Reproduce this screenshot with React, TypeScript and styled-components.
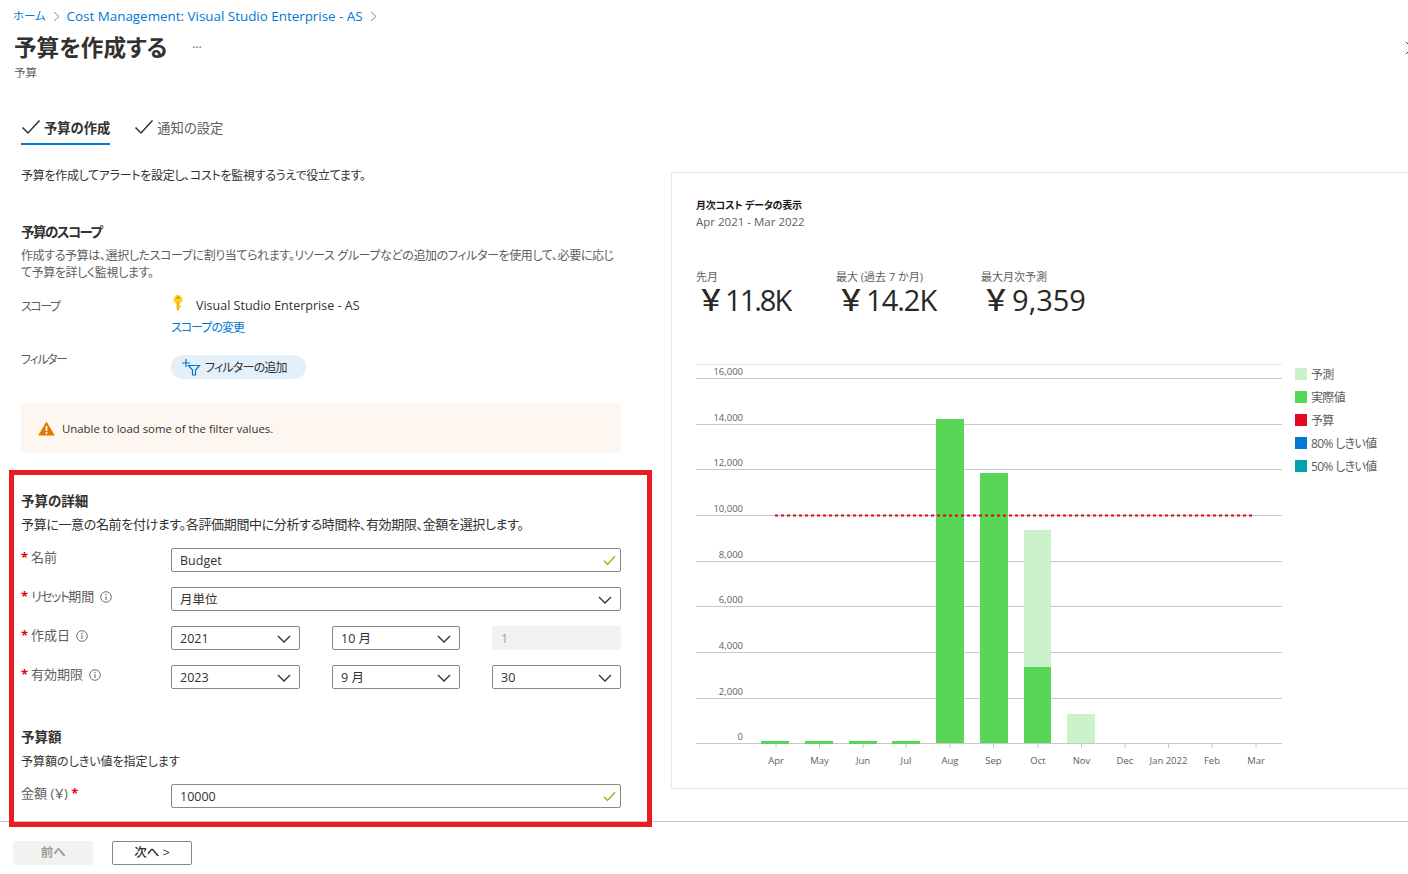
import React from 'react';
import styled, { createGlobalStyle } from 'styled-components';

const GlobalStyle = createGlobalStyle`
  html, body {
    margin: 0;
    padding: 0;
    background: #fff;
    overflow: hidden;
  }
  body {
    font-family: "Open Sans", "Noto Sans CJK JP", sans-serif;
    font-size: 13px;
    font-feature-settings: "palt";
    color: #323130;
  }
  * { box-sizing: border-box; }
`;

const Check = ({ color = '#323130', size = 20, weight = 1.5 }: { color?: string; size?: number; weight?: number }) => (
  <svg width={size} height={size} viewBox="0 0 20 20" fill="none">
    <path d="M1.5 10.5 L7 16 L18.5 3.5" stroke={color} strokeWidth={weight} />
  </svg>
);

const Chevron = () => (
  <svg width="14" height="8" viewBox="0 0 14 8" fill="none">
    <path d="M1 1 L7 7 L13 1" stroke="#323130" strokeWidth="1.3" />
  </svg>
);

const Crumb = () => (
  <svg width="7" height="11" viewBox="0 0 7 11" fill="none">
    <path d="M1 1 L6 5.5 L1 10" stroke="#8a8886" strokeWidth="1" />
  </svg>
);

const Info = () => (
  <svg width="12" height="12" viewBox="0 0 12 12" fill="none">
    <circle cx="6" cy="6" r="5.3" stroke="#605e5c" strokeWidth="0.9" />
    <path d="M6 5.2 V9" stroke="#605e5c" strokeWidth="1" />
    <circle cx="6" cy="3.5" r="0.7" fill="#605e5c" />
  </svg>
);

const KeyIcon = () => (
  <svg width="10" height="17" viewBox="0 0 10 17" fill="none">
    <circle cx="5" cy="4.5" r="4.4" fill="#fcd116" />
    <path d="M3.5 7 H6.5 V14 L5 16 L3.5 14 Z" fill="#f4b90e" />
    <path d="M6.5 10.5 H8 V12 H6.5 Z" fill="#f4b90e" />
    <ellipse cx="5" cy="2.6" rx="1.4" ry="0.9" fill="#a9812a" />
  </svg>
);

const FilterAdd = () => (
  <svg width="20" height="18" viewBox="0 0 20 18" fill="none">
    <path d="M5 1 V9 M1 5 H9" stroke="#0078d4" strokeWidth="1.2" />
    <path d="M7.5 7.5 H18.5 L14.5 12 V17 H11.5 V12 Z" stroke="#0078d4" strokeWidth="1.2" />
  </svg>
);

const Warning = () => (
  <svg width="17" height="15" viewBox="0 0 17 15">
    <path d="M8.5 0.5 L16.8 14.5 H0.2 Z" fill="#e07a00" />
    <path d="M8.5 5 V10" stroke="#fff" strokeWidth="1.6" />
    <circle cx="8.5" cy="12" r="1" fill="#fff" />
  </svg>
);

const Page = styled.div`
  position: relative;
  width: 1408px;
  height: 874px;
  overflow: hidden;
  background: #fff;
`;

const Breadcrumb = styled.nav`
  display: flex;
  align-items: center;
  gap: 7px;
  height: 16px;
  margin: 8px 0 0 13px;
  font-size: 13.4px;
  line-height: 16px;
  color: #0078d4;
`;

const HomeCrumb = styled.span`
  font-size: 11.4px;
`;

const TitleRow = styled.div`
  display: flex;
  align-items: center;
  height: 34px;
  margin: 7px 0 0 14px;
`;

const Title = styled.h1`
  margin: 0;
  font-size: 22.6px;
  font-weight: 600;
  line-height: 34px;
  color: #323130;
`;

const More = styled.span`
  margin-left: 25px;
  font-size: 12px;
  line-height: 12px;
  color: #605e5c;
`;

const Close = styled.svg`
  margin-left: auto;
  margin-right: -11px;
`;

const SubTitle = styled.div`
  margin-left: 14px;
  font-size: 11.5px;
  line-height: 16px;
  color: #605e5c;
`;

const Tabs = styled.div`
  display: flex;
  gap: 24px;
  height: 33px;
  margin: 31px 0 0 21px;
`;

const Tab = styled.div<{ $active?: boolean }>`
  display: flex;
  align-items: center;
  gap: 3px;
  height: 33px;
  padding-bottom: 1px;
  font-size: 13.3px;
  font-weight: ${(p) => (p.$active ? 600 : 400)};
  color: ${(p) => (p.$active ? '#323130' : '#605e5c')};
  border-bottom: 2px solid ${(p) => (p.$active ? '#0078d4' : 'transparent')};
`;

const Main = styled.div`
  display: flex;
  height: 677px;
  border-bottom: 1px solid #c8c6c4;
`;

const FormColumn = styled.div`
  width: 600px;
  margin-left: 21px;
  padding-top: 22px;
`;

const Paragraph = styled.p<{ $size?: number; $tracking?: number }>`
  margin: 0;
  font-size: ${(p) => p.$size ?? 12}px;
  letter-spacing: ${(p) => p.$tracking ?? 0}px;
  line-height: 17px;
  color: #323130;
`;

const Description = styled(Paragraph)`
  color: #605e5c;
`;

const SectionTitle = styled.h2<{ $top: number; $bottom?: number; $tracking?: number }>`
  margin: ${(p) => p.$top}px 0 ${(p) => p.$bottom ?? 6}px;
  font-size: 13.5px;
  font-weight: 600;
  letter-spacing: ${(p) => p.$tracking ?? 0}px;
  line-height: 18px;
  color: #323130;
`;

const Row = styled.div<{ $height: number; $top?: number }>`
  display: grid;
  grid-template-columns: 150px 450px;
  height: ${(p) => p.$height}px;
  margin-top: ${(p) => p.$top ?? 0}px;
`;

const Label = styled.div`
  display: flex;
  align-items: flex-start;
  gap: 8px;
  padding-top: 1px;
  font-size: 13px;
  line-height: 17px;
  color: #605e5c;
`;

const KanaLabel = styled(Label)`
  font-size: 12px;
  letter-spacing: -1.4px;
`;

const Req = styled.span`
  color: #e3000f;
  font-weight: 700;
`;

const LabelText = styled.span`
  display: flex;
  align-items: center;
  gap: 3px;
`;

const Kana = styled.span`
  letter-spacing: -1.5px;
`;

const InfoWrap = styled.span`
  display: inline-flex;
  margin-left: 3px;
`;

const ScopeValue = styled.div`
  display: flex;
  align-items: center;
  gap: 13px;
  font-size: 12.5px;
  line-height: 17px;
`;

const KeyWrap = styled.span`
  display: inline-flex;
  margin: -4px 0 0 2px;
`;

const ScopeLink = styled.div`
  margin-top: 5px;
  font-size: 12px;
  letter-spacing: -1px;
  line-height: 17px;
  color: #0078d4;
`;

const FilterButton = styled.div`
  display: inline-flex;
  align-items: center;
  gap: 4px;
  width: 135px;
  height: 24px;
  margin-top: 5px;
  padding-left: 10px;
  border-radius: 12px;
  background: #e3eff9;
  font-size: 12px;
  letter-spacing: -0.8px;
  color: #323130;
`;

const Notice = styled.div`
  display: flex;
  align-items: center;
  gap: 7px;
  height: 50px;
  margin-top: 11px;
  padding-left: 17px;
  background: #fef7f1;
  font-size: 11.4px;
  color: #323130;
`;

const Field = styled.div<{ $disabled?: boolean }>`
  display: flex;
  align-items: center;
  justify-content: space-between;
  height: 24px;
  padding: 1px 8px 0;
  border: 1px solid ${(p) => (p.$disabled ? '#f3f2f1' : '#8a8886')};
  border-radius: 2px;
  background: ${(p) => (p.$disabled ? '#f3f2f1' : '#fff')};
  color: ${(p) => (p.$disabled ? '#a19f9d' : '#323130')};
  font-size: 12.5px;
  line-height: 22px;
`;

const ValidMark = styled.span`
  display: inline-flex;
  margin-right: -4px;
`;

const Triple = styled.div`
  display: grid;
  grid-template-columns: 129px 128px 129px;
  column-gap: 32px;
`;

const Panel = styled.section`
  flex: none;
  width: 760px;
  height: 617px;
  margin: 27px 0 0 50px;
  padding: 25px 0 0 24px;
  border: 1px solid #e8e8e8;
`;

const PanelTitle = styled.div`
  font-size: 10px;
  font-weight: 600;
  letter-spacing: -0.2px;
  line-height: 14px;
  color: #1b1a19;
`;

const PanelDates = styled.div`
  margin-top: 2px;
  font-size: 11.5px;
  line-height: 16px;
  color: #605e5c;
`;

const Stats = styled.div`
  display: flex;
  margin-top: 40px;
`;

const Stat = styled.div<{ $width: number }>`
  width: ${(p) => p.$width}px;
`;

const StatLabel = styled.div`
  font-size: 11px;
  line-height: 14px;
  color: #605e5c;
`;

const StatValue = styled.div<{ $tracking: number }>`
  display: flex;
  gap: 5px;
  margin-left: 4px;
  padding-top: 1px;
  font-size: 29px;
  font-weight: 500;
  letter-spacing: ${(p) => p.$tracking}px;
  line-height: 30px;
  color: #292827;
`;

const ChartRow = styled.div`
  display: flex;
  margin-top: 49px;
`;

const Legend = styled.ul`
  display: flex;
  flex-direction: column;
  gap: 6px;
  margin: 1px 0 0 12px;
  padding: 0;
  list-style: none;
`;

const LegendItem = styled.li`
  display: flex;
  align-items: center;
  gap: 4px;
  height: 17px;
  font-size: 12px;
  letter-spacing: -0.65px;
  white-space: nowrap;
  color: #605e5c;
`;

const Swatch = styled.span<{ $color: string }>`
  width: 12px;
  height: 12px;
  background: ${(p) => p.$color};
`;

const Footer = styled.div`
  display: flex;
  gap: 19px;
  padding: 19px 0 0 13px;
`;

const FooterButton = styled.div<{ $disabled?: boolean }>`
  display: flex;
  align-items: center;
  justify-content: center;
  width: 80px;
  height: 24px;
  padding-bottom: 3px;
  border: 1px solid ${(p) => (p.$disabled ? '#f3f2f1' : '#8a8886')};
  border-radius: 2px;
  background: ${(p) => (p.$disabled ? '#f3f2f1' : '#fff')};
  color: ${(p) => (p.$disabled ? '#a19f9d' : '#323130')};
  font-size: 12.5px;
  font-weight: ${(p) => (p.$disabled ? 600 : 500)};
`;

const Highlight = styled.div`
  position: absolute;
  left: 9px;
  top: 470px;
  width: 643px;
  height: 357px;
  border: 5px solid #ed1c24;
  pointer-events: none;
`;

const months = ['Apr', 'May', 'Jun', 'Jul', 'Aug', 'Sep', 'Oct', 'Nov', 'Dec', 'Jan 2022', 'Feb', 'Mar'];
const ticks = [16000, 14000, 12000, 10000, 8000, 6000, 4000, 2000, 0];
const monthX = [80, 123.5, 167, 210, 254, 297.5, 342, 385.5, 429, 472.5, 516, 560];

const GREEN = '#57d657';
const LIGHT = '#cbf2cb';
const ORIGIN_Y = 364;

const gridY = (value: number) => Math.round(14 + ((16000 - value) / 2000) * 45.68) + 0.5;

const Chart = () => (
  <svg width="587" height="408" viewBox="0 0 587 408" fontFamily="Open Sans, sans-serif">
    <line x1="0" x2="586" y1="0.5" y2="0.5" stroke="#e6e6e6" />
    {ticks.map((t) => (
      <g key={t}>
        <line x1="0" x2="586" y1={gridY(t)} y2={gridY(t)} stroke="#c8c8c8" />
        <text x="47" y={gridY(t) - 4} textAnchor="end" fontSize="9.5" fill="#605e5c">
          {t.toLocaleString('en-US')}
        </text>
      </g>
    ))}
    {[65, 109, 153, 196].map((x) => (
      <rect key={x} x={x} y="377" width="28" height="3" fill={GREEN} />
    ))}
    <rect x="240" y={419 - ORIGIN_Y} width="28" height={743 - 419} fill={GREEN} />
    <rect x="284" y={473 - ORIGIN_Y} width="28" height={743 - 473} fill={GREEN} />
    <rect x="328" y={530 - ORIGIN_Y} width="27" height={667 - 530} fill={LIGHT} />
    <rect x="328" y={667 - ORIGIN_Y} width="27" height={743 - 667} fill={GREEN} />
    <rect x="371" y={714 - ORIGIN_Y} width="28" height={743 - 714} fill={LIGHT} />
    <line x1="79" x2="558" y1="151.5" y2="151.5" stroke="#e3001b" strokeWidth="2" strokeDasharray="3 3" />
    {months.map((m, i) => (
      <g key={m}>
        <line x1={monthX[i]} x2={monthX[i]} y1="380" y2="384" stroke="#c8c8c8" />
        <text x={monthX[i]} y="400" textAnchor="middle" fontSize="9.5" fill="#605e5c">
          {m}
        </text>
      </g>
    ))}
  </svg>
);

const legend = [
  { label: '予測', color: '#cbf2cb' },
  { label: '実際値', color: '#57d657' },
  { label: '予算', color: '#e3081f' },
  { label: '80% しきい値', color: '#0078d4' },
  { label: '50% しきい値', color: '#00a2ad' },
];

const stats = [
  { label: '先月', value: '11.8K', width: 140, tracking: -2 },
  { label: '最大 (過去 7 か月)', value: '14.2K', width: 145, tracking: -1 },
  { label: '最大月次予測', value: '9,359', width: 120, tracking: 0 },
];

export default function App() {
  return (
    <Page>
      <GlobalStyle />
      <Breadcrumb>
        <HomeCrumb>ホーム</HomeCrumb>
        <Crumb />
        <span>Cost Management: Visual Studio Enterprise - AS</span>
        <Crumb />
      </Breadcrumb>
      <TitleRow>
        <Title>予算を作成する</Title>
        <More>···</More>
        <Close width="14" height="14" viewBox="0 0 14 14" fill="none">
          <path d="M1 1 L13 13 M13 1 L1 13" stroke="#323130" strokeWidth="1" />
        </Close>
      </TitleRow>
      <SubTitle>予算</SubTitle>
      <Tabs>
        <Tab $active>
          <Check />
          予算の作成
        </Tab>
        <Tab>
          <Check />
          通知の設定
        </Tab>
      </Tabs>
      <Main>
        <FormColumn>
          <Paragraph $tracking={-0.3}>予算を作成してアラートを設定し、コストを監視するうえで役立てます。</Paragraph>
          <SectionTitle $top={39} $tracking={-1.5}>
            予算のスコープ
          </SectionTitle>
          <Description $tracking={-0.38}>
            作成する予算は、選択したスコープに割り当てられます。リソース グループなどの追加のフィルターを使用して、必要に応じて予算を詳しく監視します。
          </Description>
          <Row $height={53} $top={16}>
            <KanaLabel>スコープ</KanaLabel>
            <div>
              <ScopeValue>
                <KeyWrap>
                  <KeyIcon />
                </KeyWrap>
                Visual Studio Enterprise - AS
              </ScopeValue>
              <ScopeLink>スコープの変更</ScopeLink>
            </div>
          </Row>
          <Row $height={42}>
            <KanaLabel>フィルター</KanaLabel>
            <div>
              <FilterButton>
                <FilterAdd />
                フィルターの追加
              </FilterButton>
            </div>
          </Row>
          <Notice>
            <Warning />
            Unable to load some of the filter values.
          </Notice>
          <SectionTitle $top={39}>予算の詳細</SectionTitle>
          <Paragraph $size={13} $tracking={-0.35}>
            予算に一意の名前を付けます。各評価期間中に分析する時間枠、有効期限、金額を選択します。
          </Paragraph>
          <Row $height={39} $top={15}>
            <Label>
              <LabelText>
                <Req>*</Req>名前
              </LabelText>
            </Label>
            <Field>
              Budget
              <ValidMark>
                <Check color="#7fba00" size={13} weight={2} />
              </ValidMark>
            </Field>
          </Row>
          <Row $height={39}>
            <Label>
              <LabelText>
                <Req>*</Req>
                <span>
                  <Kana>リセット</Kana>
                  期間
                </span>
                <InfoWrap>
                  <Info />
                </InfoWrap>
              </LabelText>
            </Label>
            <Field>
              月単位
              <Chevron />
            </Field>
          </Row>
          <Row $height={39}>
            <Label>
              <LabelText>
                <Req>*</Req>作成日
                <InfoWrap>
                  <Info />
                </InfoWrap>
              </LabelText>
            </Label>
            <Triple>
              <Field>
                2021
                <Chevron />
              </Field>
              <Field>
                10 月
                <Chevron />
              </Field>
              <Field $disabled>1</Field>
            </Triple>
          </Row>
          <Row $height={39}>
            <Label>
              <LabelText>
                <Req>*</Req>有効期限
                <InfoWrap>
                  <Info />
                </InfoWrap>
              </LabelText>
            </Label>
            <Triple>
              <Field>
                2023
                <Chevron />
              </Field>
              <Field>
                9 月
                <Chevron />
              </Field>
              <Field>
                30
                <Chevron />
              </Field>
            </Triple>
          </Row>
          <SectionTitle $top={24} $bottom={7}>
            予算額
          </SectionTitle>
          <Paragraph>予算額のしきい値を指定します</Paragraph>
          <Row $height={24} $top={14}>
            <Label>
              <span>
                金額 (￥) <Req>*</Req>
              </span>
            </Label>
            <Field>
              10000
              <ValidMark>
                <Check color="#7fba00" size={13} weight={2} />
              </ValidMark>
            </Field>
          </Row>
        </FormColumn>
        <Panel>
          <PanelTitle>月次コスト データの表示</PanelTitle>
          <PanelDates>Apr 2021 - Mar 2022</PanelDates>
          <Stats>
            {stats.map((s) => (
              <Stat key={s.label} $width={s.width}>
                <StatLabel>{s.label}</StatLabel>
                <StatValue $tracking={s.tracking}>
                  <span>￥</span>
                  <span>{s.value}</span>
                </StatValue>
              </Stat>
            ))}
          </Stats>
          <ChartRow>
            <Chart />
            <Legend>
              {legend.map((l) => (
                <LegendItem key={l.label}>
                  <Swatch $color={l.color} />
                  {l.label}
                </LegendItem>
              ))}
            </Legend>
          </ChartRow>
        </Panel>
      </Main>
      <Footer>
        <FooterButton $disabled>前へ</FooterButton>
        <FooterButton>次へ &gt;</FooterButton>
      </Footer>
      <Highlight />
    </Page>
  );
}
